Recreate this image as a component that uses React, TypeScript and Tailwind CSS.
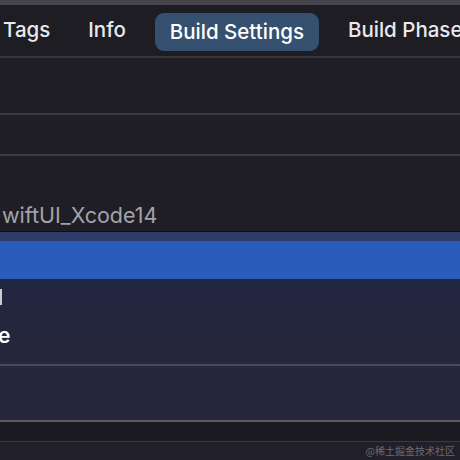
import React from "react";

export default function App() {
  const font = { fontFamily: "Inter, 'Noto Sans', sans-serif" } as React.CSSProperties;
  return (
    <div className="w-[460px] h-[460px] overflow-hidden flex flex-col bg-[#1f1e26]" style={font}>
      <div className="h-[5px] bg-[#47454c] shrink-0" />
      <div className="h-[51px] shrink-0 bg-[#1e1d24] flex items-center text-[20.5px] font-medium text-[#e9e9ec] whitespace-nowrap">
        <span className="ml-[3px]">Tags</span>
        <span className="ml-[38px]">Info</span>
        <span className="ml-[29px] h-[38px] mt-[3px] px-[15px] rounded-[9px] bg-[#36506f] text-white flex items-center">Build Settings</span>
        <span className="ml-[29px]">Build Phases</span>
      </div>
      <div className="h-[2px] shrink-0 bg-[#38373f]" />
      <div className="h-[55px] shrink-0 bg-[#1f1e26]" />
      <div className="h-[2px] shrink-0 bg-[#3b3a43]" />
      <div className="h-[39px] shrink-0 bg-[#1f1e26]" />
      <div className="h-[2px] shrink-0 bg-[#3b3a43]" />
      <div className="h-[75px] shrink-0 bg-[#1f1e27] flex items-end pb-[2px]">
        <span className="ml-[2px] text-[21.5px] leading-[28px] text-[#a3a3a8]">wiftUI_Xcode14</span>
      </div>
      <div className="h-[1px] shrink-0 bg-[#0e0e12]" />
      <div className="h-[9px] shrink-0 bg-[#2d3c69]" />
      <div className="h-[38px] shrink-0 bg-[#2a5cbc]" />
      <div className="h-[85px] shrink-0 bg-gradient-to-b from-[#212642] to-[#27263a] flex flex-col text-white text-[21px] font-semibold">
        <div className="h-[16px] mt-[10px] w-[2px] bg-[#c9cad2]" />
        <span className="ml-[-2px] mt-[19px] leading-[24px]">e</span>
      </div>
      <div className="h-[2px] shrink-0 bg-[#4a4858]" />
      <div className="h-[54px] shrink-0 bg-[#28263a]" />
      <div className="h-[2px] shrink-0 bg-[#5b5966]" />
      <div className="h-[19px] shrink-0 bg-[#1c1b21]" />
      <div className="h-[1px] shrink-0 bg-[#3a3840]" />
      <div className="h-[18px] shrink-0 bg-[#211f2a] flex items-center justify-end pr-[5px]">
        <span className="text-[10px] leading-[12px] text-[#6d6b73]" style={{ fontFamily: "'Noto Sans CJK SC', sans-serif" }}>@稀土掘金技术社区</span>
      </div>
    </div>
  );
}
